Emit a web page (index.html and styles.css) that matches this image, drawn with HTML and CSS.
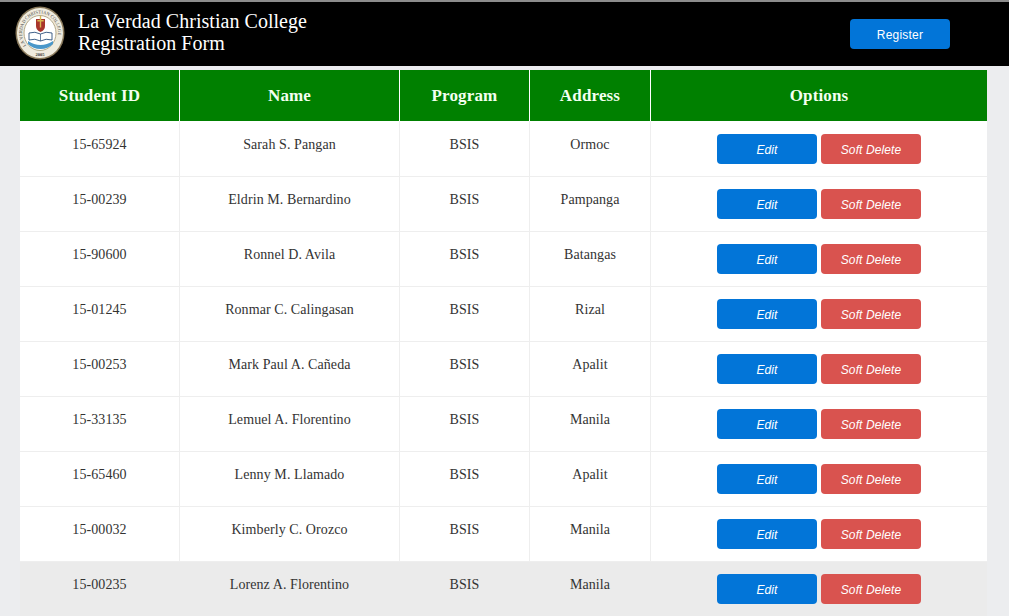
FILE: index.html
```html
<!DOCTYPE html>
<html lang="en">
<head>
  <meta charset="UTF-8">
  <meta name="viewport" content="width=device-width, initial-scale=1">
  <title>Registration Form</title>
  <link rel="stylesheet" href="styles.css">
</head>
<body>

  <header class="topbar">
    <svg class="logo" width="50" height="54" viewBox="0 0 50 54">
      <defs>
        <path id="sealArc" d="M12.300 40.800 A18 19.500 0 1 1 37.700 40.800"/>
      </defs>
      <ellipse cx="25" cy="27" rx="24.500" ry="26.500" fill="#8a7a5c"/>
      <ellipse cx="25" cy="27" rx="23" ry="25" fill="#efebde"/>
      <text class="logo-text"><textPath href="#sealArc" startOffset="2%">LA VERDAD CHRISTIAN COLLEGE</textPath></text>
      <ellipse cx="25" cy="27" rx="16" ry="17.500" fill="#fff" stroke="#a3946f" stroke-width="0.8"/>
      <text class="logo-year" x="25" y="50" text-anchor="middle">2005</text>
      <path d="M21 13h9v7q0 4-4.500 6q-4.500-2-4.500-6z" fill="#a8352c"/>
      <path d="M24.800 10h1.400v4h2.500v1.400h-2.500v6h-1.400v-6h-2.500v-1.400h2.500z" fill="#d9b850"/>
      <path d="M14 27q6-2 11.500 1q5.500-3 11.500-1v7q-6-2-11.500 1q-5.500-3-11.500-1z" fill="#fff" stroke="#2b4f7c" stroke-width="0.9"/>
      <path d="M25.500 28v7" stroke="#2b4f7c" stroke-width="0.7"/>
      <path d="M13 35q6 4 12.500 4t12.500-4v3q-5 5-12.500 5t-12.500-5z" fill="#4a97c9"/>
    </svg>
    <div class="title">La Verdad Christian College<br>Registration Form</div>
    <button class="btn btn-blue register">Register</button>
  </header>

  <table class="students">
    <thead>
      <tr>
        <th class="col-id">Student ID</th>
        <th class="col-name">Name</th>
        <th class="col-program">Program</th>
        <th class="col-address">Address</th>
        <th>Options</th>
      </tr>
    </thead>
    <tbody>
      <tr>
        <td>15-65924</td><td>Sarah S. Pangan</td><td>BSIS</td><td>Ormoc</td>
        <td class="options"><button class="btn btn-blue">Edit</button><button class="btn btn-red">Soft Delete</button></td>
      </tr>
      <tr>
        <td>15-00239</td><td>Eldrin M. Bernardino</td><td>BSIS</td><td>Pampanga</td>
        <td class="options"><button class="btn btn-blue">Edit</button><button class="btn btn-red">Soft Delete</button></td>
      </tr>
      <tr>
        <td>15-90600</td><td>Ronnel D. Avila</td><td>BSIS</td><td>Batangas</td>
        <td class="options"><button class="btn btn-blue">Edit</button><button class="btn btn-red">Soft Delete</button></td>
      </tr>
      <tr>
        <td>15-01245</td><td>Ronmar C. Calingasan</td><td>BSIS</td><td>Rizal</td>
        <td class="options"><button class="btn btn-blue">Edit</button><button class="btn btn-red">Soft Delete</button></td>
      </tr>
      <tr>
        <td>15-00253</td><td>Mark Paul A. Cañeda</td><td>BSIS</td><td>Apalit</td>
        <td class="options"><button class="btn btn-blue">Edit</button><button class="btn btn-red">Soft Delete</button></td>
      </tr>
      <tr>
        <td>15-33135</td><td>Lemuel A. Florentino</td><td>BSIS</td><td>Manila</td>
        <td class="options"><button class="btn btn-blue">Edit</button><button class="btn btn-red">Soft Delete</button></td>
      </tr>
      <tr>
        <td>15-65460</td><td>Lenny M. Llamado</td><td>BSIS</td><td>Apalit</td>
        <td class="options"><button class="btn btn-blue">Edit</button><button class="btn btn-red">Soft Delete</button></td>
      </tr>
      <tr>
        <td>15-00032</td><td>Kimberly C. Orozco</td><td>BSIS</td><td>Manila</td>
        <td class="options"><button class="btn btn-blue">Edit</button><button class="btn btn-red">Soft Delete</button></td>
      </tr>
      <tr class="hovered">
        <td>15-00235</td><td>Lorenz A. Florentino</td><td>BSIS</td><td>Manila</td>
        <td class="options"><button class="btn btn-blue">Edit</button><button class="btn btn-red">Soft Delete</button></td>
      </tr>
    </tbody>
  </table>

</body>
</html>
```

FILE: styles.css
```css
body {
  margin: 0;
  background-color: #ecedef;
  font-family: "Liberation Serif", serif;
  color: #333;
  overflow: hidden;
}
.topbar {
  display: flex;
  align-items: center;
  height: 64px;
  padding-left: 15px;
  background-color: #000;
  border-top: 2px solid #8c8c8c;
}
.logo {
  flex: none;
  margin-bottom: 2px;
}
.logo-text {
  font-family: "Liberation Serif", serif;
  font-size: 4.600px;
  fill: #4a4a4a;
}
.logo-year {
  font-family: "Liberation Serif", serif;
  font-size: 4.500px;
  font-weight: bold;
  fill: #333;
}
.title {
  margin: 0 0 5px 13px;
  color: #fff;
  font-size: 20px;
  line-height: 22px;
  letter-spacing: 0.04px;
}
.btn {
  width: 100px;
  height: 30px;
  padding: 2px 0 0;
  border: none;
  border-radius: 4px;
  color: #fff;
  font-family: "Liberation Sans", sans-serif;
  font-size: 12px;
  font-style: italic;
  letter-spacing: 0.1px;
}
.btn-blue {
  background-color: #0275d8;
}
.btn-red {
  background-color: #d9534f;
  margin-left: 4px;
}
.register {
  margin-left: auto;
  margin-right: 59px;
  font-style: normal;
  letter-spacing: 0.2px;
}
.students {
  width: 967px;
  margin: 4px 0 0 20px;
  border-collapse: collapse;
  table-layout: fixed;
  background-color: #fff;
}
.students th {
  height: 51px;
  padding: 0;
  background-color: #008000;
  color: #f4fff0;
  font-size: 17px;
  letter-spacing: 0.15px;
  border-left: 1px solid #fff;
}
.students th:first-child {
  border-left: none;
}
.col-id {
  width: 159px;
}
.col-name {
  width: 219px;
}
.col-program {
  width: 129px;
}
.col-address {
  width: 120px;
}
.students td {
  height: 55px;
  padding: 0 0 8px;
  box-sizing: border-box;
  text-align: center;
  font-size: 14px;
  letter-spacing: 0.08px;
  border-left: 1px solid #eeeeee;
  border-bottom: 1px solid #eeeeee;
}
.students td:first-child {
  border-left: none;
}
.students td.options {
  padding: 0;
}
.students tbody tr:first-child td {
  padding-top: 2px;
}
.hovered td {
  background-color: #ebebeb;
  border-color: #ebebeb;
}
```
